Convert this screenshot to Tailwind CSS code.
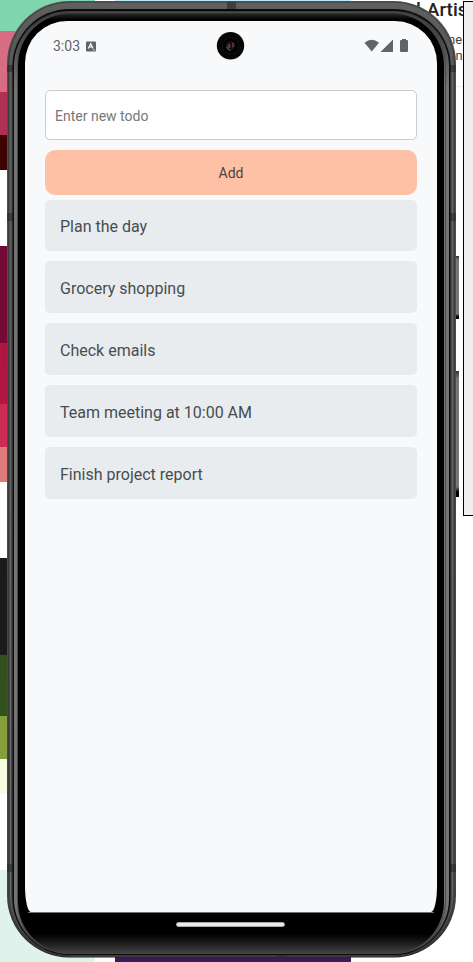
<!DOCTYPE html>
<html lang="en">
<head>
<meta charset="utf-8">
<title>Todo</title>
<script src="https://cdn.jsdelivr.net/npm/@tailwindcss/browser@4"></script>
</head>
<body class="relative h-[962px] w-[473px] overflow-hidden bg-white font-[Roboto,sans-serif]">
<!-- Desktop behind the device -->
<div class="absolute inset-y-0 left-0 flex w-[95px] flex-col">
  <div class="h-[31px] bg-[#7fd6ae]"></div>
  <div class="h-[61px] bg-[#d96c85]"></div>
  <div class="h-[43px] bg-[#b03052]"></div>
  <div class="h-[35px] bg-[#3d0301]"></div>
  <div class="h-[76px]"></div>
  <div class="h-[97px] bg-[#740938]"></div>
  <div class="h-[61px] bg-[#af1740]"></div>
  <div class="h-[43px] bg-[#cc2b52]"></div>
  <div class="h-[35px] bg-[#de7c7d]"></div>
  <div class="h-[76px]"></div>
  <div class="h-[97px] bg-[#1b1c19]"></div>
  <div class="h-[61px] bg-[#31511e]"></div>
  <div class="h-[43px] bg-[#859f3d]"></div>
  <div class="h-[35px] bg-[#f6fcdf]"></div>
  <div class="h-[76px]"></div>
  <div class="h-[92px] bg-[#dff2eb]"></div>
</div>
<div class="absolute inset-y-0 left-[115px] flex w-[236px] flex-col justify-between">
  <div class="h-5 bg-[#b9e9fb]"></div>
  <div class="h-5 bg-[#3b1c57]"></div>
</div>
<div class="absolute top-0 left-[416px] h-[87px] w-[60px] overflow-hidden border-b border-[#eeeeee] whitespace-nowrap text-[#222]">
  <div class="-mt-[1px] text-[19px] leading-[22px] font-medium"><span class="mr-[6px]">l</span>Artis</div>
  <div class="mt-[11px] ml-[32px] text-[13px] leading-[16px] text-[#444]">ne<br>on</div>
</div>
<div class="absolute top-[1px] left-[463px] h-[515px] w-[20px] border border-black bg-[#efefef]"></div>

<!-- Device body -->
<svg class="absolute inset-0" width="473" height="962" viewBox="0 0 473 962">
  <defs>
    <linearGradient id="outer" x1="0" y1="0" x2="0" y2="1">
      <stop offset="0" stop-color="#606060"/><stop offset=".07" stop-color="#505050"/><stop offset=".94" stop-color="#444"/><stop offset="1" stop-color="#202020"/>
    </linearGradient>
    <linearGradient id="line" x1="0" y1="0" x2="0" y2="1">
      <stop offset="0" stop-color="#606060"/><stop offset=".94" stop-color="#686868"/><stop offset="1" stop-color="#3a3a3a"/>
    </linearGradient>
    <linearGradient id="rim" x1="0" y1="0" x2="0" y2="1">
      <stop offset="0" stop-color="#3c3c3c"/><stop offset=".025" stop-color="#444"/><stop offset=".08" stop-color="#747474"/><stop offset=".95" stop-color="#747474"/><stop offset=".985" stop-color="#404040"/><stop offset="1" stop-color="#444"/>
    </linearGradient>
    <linearGradient id="glass" gradientUnits="userSpaceOnUse" x1="0" y1="14" x2="0" y2="954">
      <stop offset="0" stop-color="#262626"/><stop offset=".006" stop-color="#000"/><stop offset=".978" stop-color="#000"/><stop offset=".986" stop-color="#141414"/><stop offset="1" stop-color="#454545"/>
    </linearGradient>
    <linearGradient id="key" x1="0" y1="0" x2="0" y2="1">
      <stop offset="0" stop-color="#333"/><stop offset=".06" stop-color="#777"/><stop offset=".92" stop-color="#777"/><stop offset=".96" stop-color="#000"/><stop offset="1" stop-color="#000"/>
    </linearGradient>
  </defs>
  <rect x="455" y="256" width="4" height="63" fill="url(#key)"/>
  <rect x="455" y="371" width="4" height="126" fill="url(#key)"/>
  <rect x="7" y="1" width="449" height="956.5" rx="62" fill="url(#outer)"/>
  <rect x="8.5" y="2" width="446" height="954.5" rx="61" fill="none" stroke="#3c3c3c" stroke-width="1"/>
  <rect x="10.5" y="5.5" width="442" height="950" rx="59" fill="none" stroke="url(#line)" stroke-width="1"/>
  <g fill="#292929" opacity=".6">
    <rect x="7" y="65" width="6" height="7"/><rect x="450" y="65" width="6" height="7"/>
    <rect x="7" y="213" width="6" height="8"/><rect x="450" y="213" width="6" height="8"/>
    <rect x="7" y="864" width="6" height="8"/><rect x="450" y="864" width="6" height="8"/>
    <rect x="227" y="2" width="9" height="7"/><rect x="277" y="954" width="10" height="3"/>
  </g>
  <rect x="12.500" y="9" width="438" height="946" rx="57" fill="#0c0c0c"/>
  <rect x="14" y="11" width="435" height="943" rx="55" fill="url(#rim)"/>
  <rect x="17.500" y="12.500" width="428" height="941" rx="52" fill="none" stroke="#484848" stroke-width="1"/>
  <rect x="18" y="13.500" width="426" height="940" rx="52" fill="url(#glass)"/>
  <path d="M105 10.500H350" stroke="#050505"/>
</svg>

<!-- Screen -->
<main class="absolute top-[21px] left-[25px] h-[891px] w-[412px] overflow-hidden bg-[#f8f9fb] [border-radius:42px_42px_6px_6px/42px_42px_26px_26px]">
  <header class="flex h-[50px] items-center pr-[28px] pl-[28px] text-[#636466]">
    <span class="text-[14px] leading-5">3:03</span>
    <svg class="ml-[6px]" width="10" height="11" viewBox="0 0 10 11"><path fill="#636466" d="M1 .5h8q1 0 1 1v8q0 1-1 1H1q-1 0-1-1v-8q0-1 1-1z"/><path d="M2.400 7.500 4.700 2.700 7 7.500M3.200 6h3" fill="none" stroke="#fff" stroke-width="1.200"/><path d="M6.500 9h2.500" stroke="#bbb"/></svg>
    <svg class="ml-auto" width="45" height="16" viewBox="0 0 45 16"><g fill="#636466"><path d="M.5 4.800Q7.700-1.200 15 4.800L7.700 13.500z"/><path d="M29 1.500V14H16.500z"/><path d="M38 1h4v1h1q1 0 1 1v10q0 1-1 1h-6q-1 0-1-1V3q0-1 1-1h1z"/></g></svg>
  </header>
  <section class="flex flex-col px-5 pt-[19.400px]">
    <input type="text" placeholder="Enter new todo" class="block h-[49.600px] w-full rounded-[5px] border border-[#cccccc] bg-white px-[9px] pt-px text-[14px] placeholder:text-[#777777]">
    <button class="mt-[9.600px] h-[45px] rounded-[10px] bg-[#ffc1a5] pt-[2px] text-[14px] text-[#4f413b]">Add</button>
    <ul class="mt-[5px] flex flex-col gap-[10px] text-[16px] text-[#484c4f]">
      <li class="flex h-[51.900px] items-center rounded-[5px] bg-[#e8ecef] px-[15px] pt-[3px]">Plan the day</li>
      <li class="flex h-[51.900px] items-center rounded-[5px] bg-[#e8ecef] px-[15px] pt-[3px]">Grocery shopping</li>
      <li class="flex h-[51.900px] items-center rounded-[5px] bg-[#e8ecef] px-[15px] pt-[3px]">Check emails</li>
      <li class="flex h-[51.900px] items-center rounded-[5px] bg-[#e8ecef] px-[15px] pt-[3px]">Team meeting at 10:00 AM</li>
      <li class="flex h-[51.900px] items-center rounded-[5px] bg-[#e8ecef] px-[15px] pt-[3px]">Finish project report</li>
    </ul>
  </section>
</main>

<!-- Camera and gesture bar -->
<svg class="absolute top-[31px] left-[216px]" width="29" height="29" viewBox="0 0 29 29"><circle cx="14.500" cy="14.700" r="13.700" fill="#060606"/><circle cx="14.500" cy="14.700" r="8" fill="#000" stroke="#121212"/><circle cx="14.500" cy="14.700" r="5" fill="#160f12"/><ellipse cx="13" cy="15" rx="1.500" ry="2.600" fill="#5a402b"/><path d="M16 12q3 2 0 4" fill="none" stroke="#7a4374" stroke-width="1.200"/><path d="M10.500 16q1 3 4 3.500" fill="none" stroke="#6b6765"/></svg>
<div class="absolute top-[912px] left-[28px] h-px w-[406px] bg-[#6d6e6f]"></div>
<div class="absolute top-[922px] left-[176px] h-[5px] w-[109px] rounded-full border border-[#a9a7a8] bg-[#ebe7ea]"></div>
</body>
</html>
